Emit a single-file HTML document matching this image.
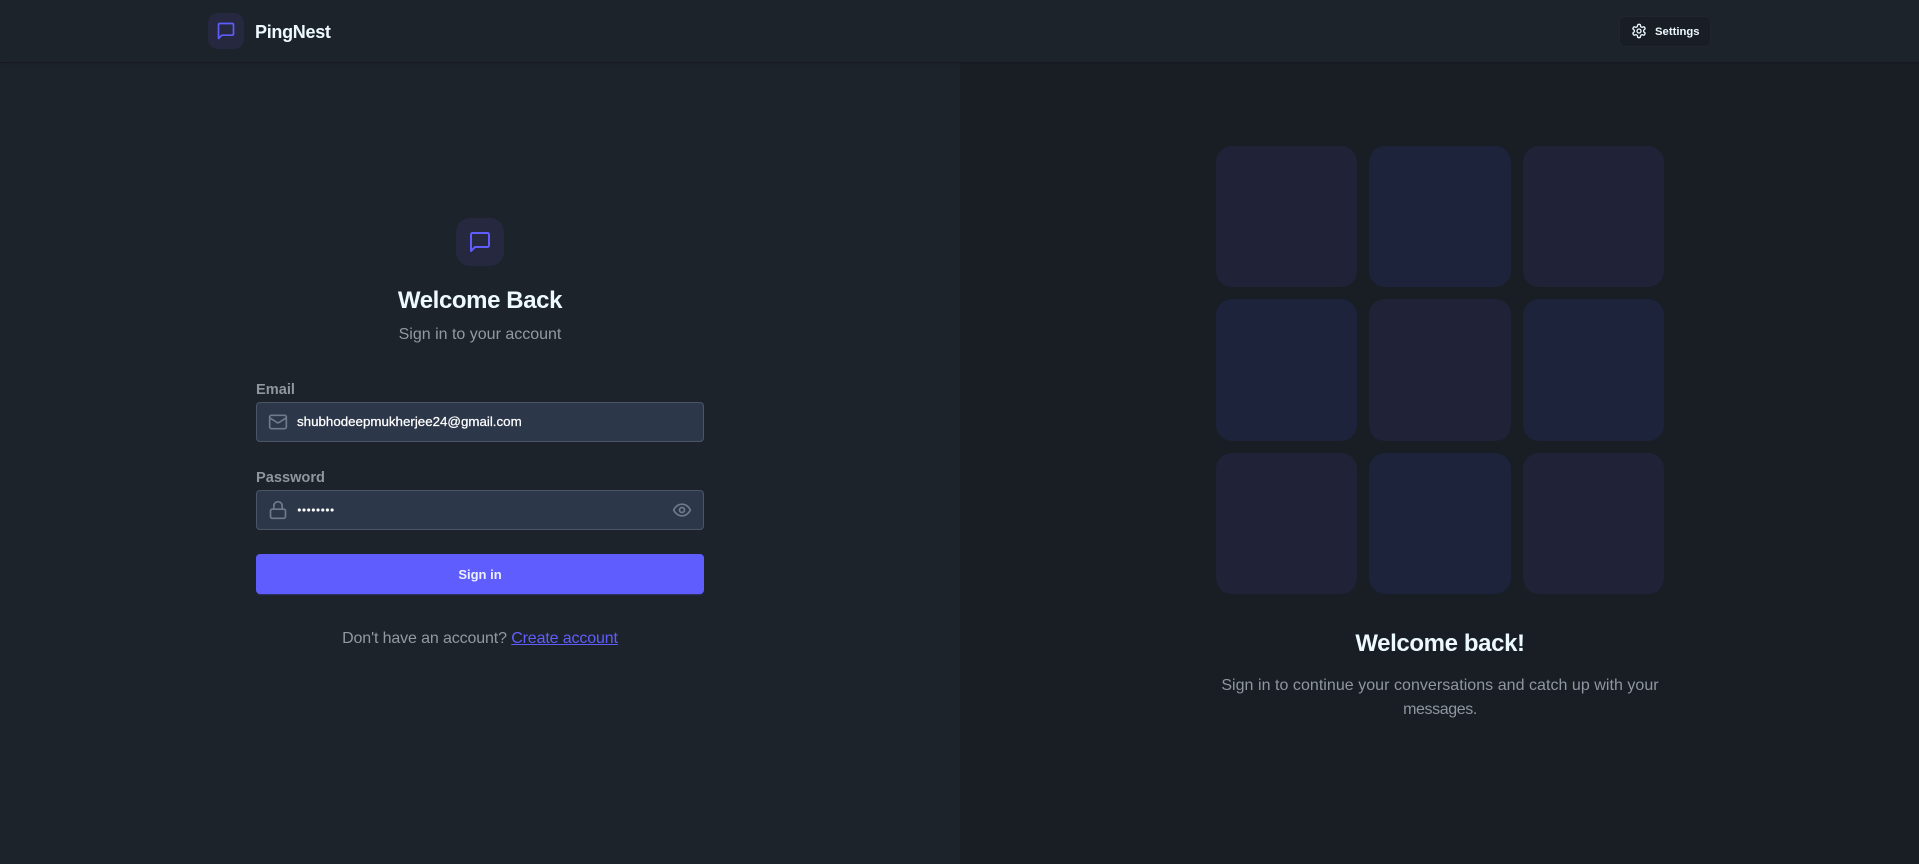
<!DOCTYPE html>
<html lang="en">
<head>
<meta charset="utf-8">
<title>PingNest</title>
<style>
*{box-sizing:border-box;margin:0;padding:0}
html,body{width:1919px;height:864px;overflow:hidden;background:#1d232a;font-family:"Liberation Sans","Noto Sans CJK SC",sans-serif}
.abs{position:absolute}
.t{position:absolute;white-space:nowrap}
.c{text-align:center}
svg{position:absolute;fill:none;stroke:currentColor;stroke-width:2;stroke-linecap:round;stroke-linejoin:round}
.right{position:absolute;left:960px;top:63px;width:959px;height:801px;background:#191e24}
.hdr{position:absolute;left:0;top:0;width:1919px;height:63px;background:#1d232a;border-bottom:1px solid #171b21;box-shadow:0 1px 2px rgba(0,0,0,.08)}
.logo{position:absolute;border-radius:10px;background:#25283f}
.inp{position:absolute;left:256px;width:448px;height:40px;background:#2c374a;border:1px solid #4a5567;border-radius:4px}
.cell{position:absolute;width:141.33px;height:141.33px;border-radius:16px}
.a{background:#202238}
.b{background:#1d233b}
</style>
</head>
<body>
<div class="right"></div>
<div class="hdr"></div>

<div class="logo" style="left:208px;top:13px;width:36px;height:36px"></div>
<svg style="left:216px;top:21px;color:#605dff" width="20" height="20" viewBox="0 0 24 24"><path d="M21 15.5a1.5 1.5 0 0 1-1.5 1.5H7l-4 4V4.5A1.5 1.5 0 0 1 4.5 3h15A1.5 1.5 0 0 1 21 4.5z"/></svg>
<div class="t" style="left:255px;top:20px;font-size:18px;line-height:24px;font-weight:700;letter-spacing:-.3px;color:#ecf9ff">PingNest</div>

<div class="abs" style="left:1619px;top:16px;width:92px;height:31px;background:#191e24;border:1px solid #20262d;border-radius:6px"></div>
<svg style="left:1631px;top:23px;color:#ecf9ff" width="16" height="16" viewBox="0 0 24 24"><path d="M12.22 2h-.44a2 2 0 0 0-2 2v.18a2 2 0 0 1-1 1.73l-.43.25a2 2 0 0 1-2 0l-.15-.08a2 2 0 0 0-2.73.73l-.22.38a2 2 0 0 0 .73 2.73l.15.1a2 2 0 0 1 1 1.72v.51a2 2 0 0 1-1 1.74l-.15.09a2 2 0 0 0-.73 2.73l.22.38a2 2 0 0 0 2.73.73l.15-.08a2 2 0 0 1 2 0l.43.25a2 2 0 0 1 1 1.73V20a2 2 0 0 0 2 2h.44a2 2 0 0 0 2-2v-.18a2 2 0 0 1 1-1.73l.43-.25a2 2 0 0 1 2 0l.15.08a2 2 0 0 0 2.73-.73l.22-.39a2 2 0 0 0-.73-2.73l-.15-.08a2 2 0 0 1-1-1.74v-.5a2 2 0 0 1 1-1.74l.15-.09a2 2 0 0 0 .73-2.73l-.22-.38a2 2 0 0 0-2.73-.73l-.15.08a2 2 0 0 1-2 0l-.43-.25a2 2 0 0 1-1-1.73V4a2 2 0 0 0-2-2z"/><circle cx="12" cy="12" r="3"/></svg>
<div class="t" style="left:1655px;top:24px;font-size:11.3px;line-height:16px;font-weight:700;color:#ecf9ff">Settings</div>

<div class="logo" style="left:456px;top:218px;width:48px;height:48px;border-radius:14px"></div>
<svg style="left:468px;top:230px;color:#605dff" width="24" height="24" viewBox="0 0 24 24"><path d="M21 15.5a1.5 1.5 0 0 1-1.5 1.5H7l-4 4V4.5A1.5 1.5 0 0 1 4.5 3h15A1.5 1.5 0 0 1 21 4.5z"/></svg>
<div class="t c" style="left:256px;top:285px;width:448px;font-size:24px;line-height:32px;font-weight:700;letter-spacing:-.4px;color:#ecf9ff">Welcome Back</div>
<div class="t c" style="left:256px;top:323px;width:448px;font-size:16px;line-height:24px;color:#9299a3">Sign in to your account</div>

<div class="t" style="left:256px;top:380px;font-size:14.6px;line-height:20px;font-weight:700;color:#8f96a0">Email</div>
<div class="inp" style="top:402px"></div>
<svg style="left:268px;top:412px;color:#6f7a8b" width="20" height="20" viewBox="0 0 24 24"><rect x="2" y="4" width="20" height="16" rx="2"/><path d="m22 7-8.97 5.7a1.94 1.94 0 0 1-2.06 0L2 7"/></svg>
<div class="t" style="left:297px;top:414px;font-size:13.33px;line-height:16px;color:#fff;-webkit-text-stroke:.25px #fff">shubhodeepmukherjee24@gmail.com</div>

<div class="t" style="left:256px;top:468px;font-size:14.6px;line-height:20px;font-weight:700;color:#8f96a0">Password</div>
<div class="inp" style="top:490px"></div>
<svg style="left:268px;top:500px;color:#6f7a8b" width="20" height="20" viewBox="0 0 24 24"><rect x="3" y="11" width="18" height="11" rx="2"/><path d="M7 11V7a5 5 0 0 1 10 0v4"/></svg>
<div class="abs" style="left:297px;top:508px;width:38px;height:4px;background:radial-gradient(circle at 2.3px 2px,#fff 1.4px,transparent 1.8px) 0 0/4.7px 4px repeat-x"></div>
<svg style="left:672px;top:500px;color:#6f7a8b" width="20" height="20" viewBox="0 0 24 24"><path d="M2 12s3-7 10-7 10 7 10 7-3 7-10 7-10-7-10-7Z"/><circle cx="12" cy="12" r="3"/></svg>

<div class="abs" style="left:256px;top:554px;width:448px;height:40px;background:#605dff;border-radius:4px;box-shadow:0 2px 1px -1px rgba(96,93,255,.3)"></div>
<div class="t c" style="left:256px;top:565px;width:448px;font-size:13px;line-height:20px;font-weight:700;color:#edf1fe">Sign in</div>

<div class="t c" style="left:256px;top:627px;width:448px;font-size:16px;line-height:24px;letter-spacing:-.13px;color:#9299a3">Don't have an account? <span style="color:#605dff;text-decoration:underline">Create account</span></div>

<div class="cell a" style="left:1216px;top:146px"></div>
<div class="cell b" style="left:1369.33px;top:146px"></div>
<div class="cell a" style="left:1522.67px;top:146px"></div>
<div class="cell b" style="left:1216px;top:299.33px"></div>
<div class="cell a" style="left:1369.33px;top:299.33px"></div>
<div class="cell b" style="left:1522.67px;top:299.33px"></div>
<div class="cell a" style="left:1216px;top:452.67px"></div>
<div class="cell b" style="left:1369.33px;top:452.67px"></div>
<div class="cell a" style="left:1522.67px;top:452.67px"></div>

<div class="t c" style="left:1216px;top:628px;width:448px;font-size:24px;line-height:32px;font-weight:700;letter-spacing:-.38px;color:#ecf9ff">Welcome back!</div>
<div class="t c" style="left:1200px;top:674px;width:480px;font-size:16px;line-height:24px;letter-spacing:.04px;color:#8f96a0">Sign in to continue your conversations and catch up with your<br><span style="letter-spacing:-.4px">messages.</span></div>
</body>
</html>
